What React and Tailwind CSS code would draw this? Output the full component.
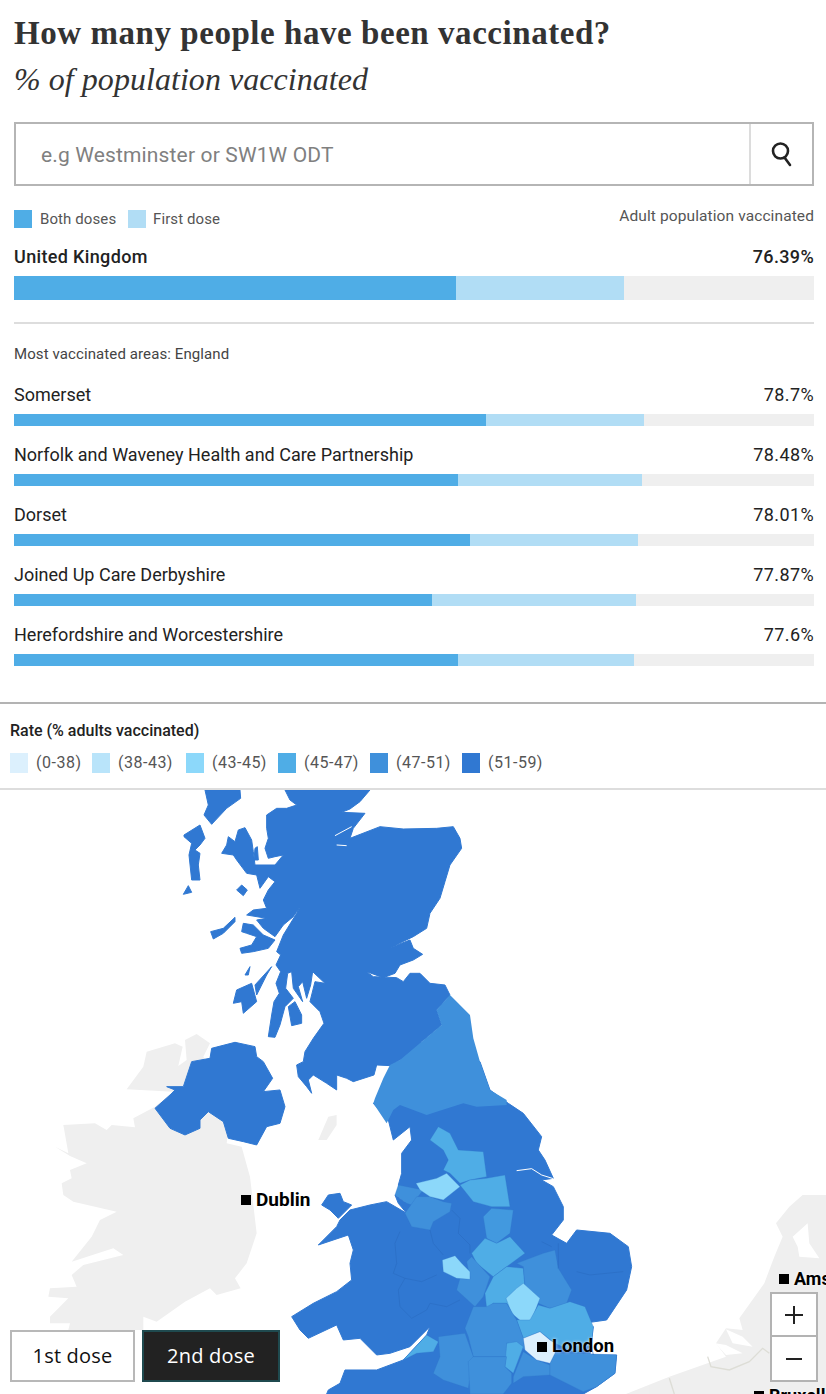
import React from "react";

const sans = "font-['Roboto','Liberation_Sans',sans-serif]";
const D = "#3078d2", M = "#3f90db", L = "#4fade6", P = "#8cd8fa", V = "#dcf0fd", G = "#efefef";

const rows = [
  { name: "Somerset", val: "78.7%", a: 472, b: 158 },
  { name: "Norfolk and Waveney Health and Care Partnership", val: "78.48%", a: 444, b: 184 },
  { name: "Dorset", val: "78.01%", a: 456, b: 168 },
  { name: "Joined Up Care Derbyshire", val: "77.87%", a: 418, b: 204 },
  { name: "Herefordshire and Worcestershire", val: "77.6%", a: 444, b: 176 },
];

const ranges = [
  ["(0-38)", "#dcf0fd", "w-[82px]"],
  ["(38-43)", "#b9e4fa", "w-[94px]"],
  ["(43-45)", "#8cd8fa", "w-[92px]"],
  ["(45-47)", "#4fade6", "w-[92px]"],
  ["(47-51)", "#3f90db", "w-[92px]"],
  ["(51-59)", "#3078d2", "w-[92px]"],
];

const regions = [
  [L, "600,150 625,110 660,130 685,180 760,185 770,260 720,270 690,280 660,250 640,240 655,210 640,180"],
  [M, "505,285 580,300 560,325 545,345 530,340 495,315"],
  [M, "525,370 560,320 600,320 640,335 665,340 660,365 610,395 600,420 545,410"],
  [P, "558,280 620,265 650,250 690,290 640,330 600,320 570,300"],
  [L, "690,285 720,270 770,265 825,255 840,350 785,350 730,335"],
  ["#4299df", "760,380 785,355 850,360 840,430 800,460 770,445"],
  [L, "725,490 765,445 800,460 840,440 885,490 830,530 790,560 740,520"],
  [M, "680,600 690,565 720,565 710,515 725,500 780,560 760,620 735,650"],
  [P, "637,510 675,497 695,520 720,545 720,568 680,565 640,545"],
  [L, "765,610 790,560 830,530 880,535 885,590 830,625 860,680 830,640 790,640 770,655"],
  [M, "860,520 940,490 975,480 985,535 1025,600 1010,640 960,655 925,640 885,590 880,530"],
  [P, "828,625 860,595 880,580 930,625 905,690 875,695 845,670"],
  [L, "860,690 900,690 925,645 960,655 1020,635 1065,650 1090,710 1085,760 1040,790 975,760 930,725 880,745"],
  [M, "705,715 730,650 770,650 790,640 830,640 860,690 880,745 885,780 860,760 830,760 830,800 730,800 715,740"],
  [L, "830,760 860,755 880,770 850,850 825,830"],
  [L, "520,810 590,735 625,755 610,785 560,790"],
  [M, "625,740 705,730 730,800 715,895 640,870 610,850 630,800"],
  [M, "715,815 730,800 830,800 825,830 845,850 845,880 820,912 720,912"],
  [M, "850,860 880,785 920,810 960,825 960,855 880,860 850,880"],
  [M, "960,820 975,790 1040,790 1160,795 1155,850 1100,890 1060,905 960,855"],
  [V, "880,745 930,725 960,750 975,760 975,790 960,820 920,810 885,780"],
];

function MapArt() {
  return (
    <svg className="absolute left-0 top-0" width="826" height="605" viewBox="0 790 826 605">
      {/* Ireland */}
      <g transform="translate(0 1030) scale(0.3333)" fill={G}>
        <path d="M380 178 L430 110 L440 65 L525 40 L548 50 L535 108 L560 90 L555 30 L590 12 L630 40 L610 80 L700 200 L680 340 L725 350 L750 440 L770 610 L740 700 L705 745 L722 775 L650 795 L630 775 L555 815 L470 875 L430 860 L430 900 L205 900 L210 880 L150 880 L150 860 L205 805 L145 800 L150 775 L230 770 L215 735 L250 705 L370 675 L340 655 L215 695 L275 620 L300 570 L350 545 L220 515 L190 495 L185 460 L215 445 L210 420 L260 400 L210 378 L165 350 L205 370 L190 285 L285 280 L320 300 L335 285 L405 292 L400 265 L465 230 L520 185 Z" />
      </g>
      {/* Isle of Man */}
      <g transform="translate(120 785) scale(0.3333)" fill={G}>
        <path d="M595 1065 L625 995 L650 990 L650 1020 L620 1065 Z" />
      </g>
      {/* Netherlands, Belgium */}
      <g transform="translate(626 1180) scale(0.3333)">
        <path fill={G} d="M600 45 L530 45 L490 80 L450 130 L470 170 L445 230 L415 310 L340 415 L350 450 L300 445 L270 490 L300 530 L130 590 L0 642 L600 642 Z" />
        <path fill="#fff" d="M500 170 L545 130 L550 190 L580 235 L520 230 L515 200 Z" />
        <path fill="#fff" d="M300 448 L350 470 L380 500 L320 490 Z" />
        <path fill="#fff" d="M268 490 L300 495 L350 520 L300 525 Z" />
        <path fill="none" stroke="#ddddd6" strokeWidth="4" d="M245 530 L255 560 L310 570 L370 545 L410 505 L430 520" />
        <path fill="none" stroke="#ddddd6" strokeWidth="4" d="M130 595 L145 642" />
      </g>
      <g transform="translate(230 1090) scale(0.3333)" fill={G}>
        <path d="M1195 912 L1260 885 L1260 912 Z" />
      </g>
      {/* Scotland + NI */}
      <g transform="translate(120 785) scale(0.3333)" fill={D} stroke={D} strokeWidth="3" strokeLinejoin="round">
        <path d="M495 15 L750 15 L720 50 L690 72 L665 82 L735 85 L700 130 L690 160 L780 125 L850 132 L950 130 L1000 125 L1020 160 L1025 190 L990 240 L975 290 L960 340 L930 385 L920 430 L880 455 L810 488 L870 465 L880 490 L908 508 L880 525 L840 540 L825 565 L790 578 L740 560 L760 575 L830 578 L850 590 L870 565 L900 565 L930 595 L975 600 L990 630 L950 675 L965 720 L905 770 L880 810 L840 825 L810 842 L770 840 L762 870 L700 890 L680 880 L650 870 L650 915 L620 895 L580 870 L565 885 L575 925 L560 905 L535 875 L530 840 L550 830 L555 800 L580 760 L612 715 L600 680 L570 650 L585 590 L615 595 L578 560 L572 600 L560 640 L548 590 L535 605 L548 650 L520 610 L515 560 L503 565 L497 610 L520 640 L495 665 L480 720 L465 757 L445 755 L455 690 L462 650 L478 625 L468 595 L482 560 L468 540 L482 510 L470 500 L490 450 L530 385 L540 365 L520 395 L490 420 L465 455 L430 430 L410 405 L440 400 L380 390 L400 375 L440 370 L430 345 L445 315 L465 290 L445 275 L420 310 L410 270 L380 265 L350 225 L340 210 L305 205 L320 180 L325 155 L345 170 L355 135 L375 128 L395 165 L400 200 L405 240 L465 240 L490 210 L465 215 L445 220 L435 190 L445 160 L440 130 L440 90 L470 70 L500 70 L530 60 L510 45 Z" />
        <path d="M365 440 L370 415 L400 420 L430 450 L465 465 L445 490 L400 500 L365 505 L360 490 L395 480 L410 455 L380 445 Z" />
        <path d="M255 15 L360 15 L362 40 L320 70 L275 118 L252 90 L265 60 Z" />
        <path d="M192 150 L240 120 L255 160 L240 180 L225 195 L240 205 L235 240 L240 285 L215 285 L207 210 L215 175 L192 155 Z" />
        <path d="M190 328 L205 302 L215 322 Z" />
        <path d="M350 315 L365 300 L382 315 L370 332 Z" />
        <path d="M272 440 L310 430 L345 397 L345 410 L310 445 L280 462 Z" />
        <path d="M375 570 L390 545 L385 570 Z" />
        <path d="M405 600 L455 545 L440 570 L410 630 Z" />
        <path d="M340 655 L350 615 L395 595 L410 650 L370 685 L365 650 Z" />
        <path d="M505 665 L525 650 L545 690 L545 715 L515 722 Z" />
        <path d="M405 190 L412 185 L415 225 L402 225 Z" />
        <path d="M105 970 L150 930 L165 915 L140 905 L190 905 L215 830 L270 820 L275 790 L345 772 L405 785 L410 815 L430 830 L458 880 L430 920 L480 915 L495 965 L480 1015 L440 1025 L410 1080 L370 1070 L325 1060 L310 1010 L265 980 L240 1005 L240 1030 L195 1050 L150 1030 Z" />
        <path fill="none" stroke="#fff" strokeWidth="3" d="M645 152 L695 125 M650 180 L680 182" />
      </g>
      {/* England and Wales */}
      <g transform="translate(230 1090) scale(0.3333)">
        <path fill={D} stroke={D} strokeWidth="3" strokeLinejoin="round" d="M430 40 L475 90 L490 150 L540 110 L545 150 L515 190 L515 250 L505 285 L530 340 L495 315 L505 340 L530 370 L470 335 L420 345 L360 360 L330 390 L320 410 L265 465 L355 435 L370 480 L360 520 L365 570 L320 605 L250 640 L185 680 L210 720 L235 745 L320 705 L340 750 L390 745 L440 795 L480 790 L540 770 L600 710 L590 735 L520 810 L440 840 L345 840 L330 880 L295 900 L290 912 L1060 912 L1100 890 L1155 850 L1160 795 L1080 795 L1090 710 L1060 700 L1130 690 L1190 600 L1205 530 L1195 470 L1140 430 L1040 420 L1010 460 L965 435 L1000 390 L1000 350 L970 290 L935 270 L970 265 L945 210 L925 180 L935 140 L880 70 L835 40 L780 0 L750 -85 L700 -100 Z" />
        <path fill={D} stroke={D} strokeWidth="3" strokeLinejoin="round" d="M275 345 L295 315 L330 310 L340 335 L365 345 L325 385 L300 360 Z" />
        <path fill={M} d="M660 -285 L720 -225 L730 -155 L750 -85 L780 0 L830 30 L830 45 L740 50 L700 40 L620 65 L590 75 L510 45 L490 60 L470 100 L430 40 L435 25 L460 -35 L480 -75 L510 -90 L575 -145 L635 -195 L620 -240 Z" />
        {regions.map(([c, p], i) => (
          <polygon key={i} points={p} fill={c} stroke="#2f74c8" strokeOpacity="0.45" strokeWidth="2" strokeLinejoin="round" />
        ))}
        <path fill="none" stroke="#fff" strokeWidth="3" d="M860 242 L905 236 L935 255 L970 266" />
        <path fill="none" stroke="#2a6cc2" strokeWidth="2" d="M510 425 L495 460 L500 520 L490 550 L525 565 L575 575 L620 555 M525 565 L505 600 L510 650 L545 685 L590 660 L600 640 L650 650 L690 630 M600 420 L610 460 L640 495 M665 360 L690 385 L685 430 L720 465 L720 490 M1040 545 L1080 555 L1180 545 M985 535 L985 460 M935 455 L965 470 M1080 740 L1090 795" />
      </g>
    </svg>
  );
}

function Place({ name, cls, size }) {
  return (
    <div className={`absolute flex items-center gap-[5px] ${cls}`}>
      <span className="block h-[10px] w-[10px] bg-black" />
      <span className={`font-['Roboto','Liberation_Sans',sans-serif] font-bold text-black [text-shadow:0_0_3px_#fff] ${size}`}>{name}</span>
    </div>
  );
}

export default function App() {
  return (
    <div className={`h-[1394px] w-[826px] overflow-hidden bg-white ${sans}`}>
      <div className="pl-[14px] pr-[12px] pt-[14px]">
        <h1 className="font-['Liberation_Serif',serif] text-[33px] font-bold leading-[38px] tracking-[0.55px] text-[#333]">How many people have been vaccinated?</h1>
        <h2 className="mt-[8px] font-['Liberation_Serif',serif] text-[32px] italic leading-[38px] tracking-[0.05px] text-[#333]">% of population vaccinated</h2>
        <div className="mt-[24px] flex h-[64px] w-[800px] border-2 border-[#b5b5b5]">
          <div className="flex flex-1 items-center pl-[25px] pt-[3px] text-[21px] tracking-[0.15px] text-[#808080]">e.g Westminster or SW1W ODT</div>
          <div className="flex w-[63px] items-center justify-center border-l-2 border-[#dcdcdc]">
            <svg width="24" height="26" viewBox="0 0 24 26" fill="none" stroke="#222" strokeWidth="2.6">
              <circle cx="10.5" cy="10" r="7.5" />
              <path d="M14.5 16.5 L20 24" strokeLinecap="round" />
            </svg>
          </div>
        </div>

        <div className="mt-[21px] flex h-[24px] items-start justify-between text-[15px] tracking-[0.1px] text-[#555]">
          <div className="flex items-center pt-[3px]">
            <span className="h-[18px] w-[18px] bg-[#4fade6]" />
            <span className="ml-[8px] w-[88px] leading-[18px]">Both doses</span>
            <span className="h-[18px] w-[18px] bg-[#b1ddf5]" />
            <span className="ml-[7px] leading-[18px]">First dose</span>
          </div>
          <span className="text-[15.5px] leading-[18px]">Adult population vaccinated</span>
        </div>

        <div className="mt-[14px] flex h-[24px] items-center justify-between text-[18px] font-medium leading-[24px] tracking-[0.35px] text-[#222]">
          <span>United Kingdom</span>
          <span>76.39%</span>
        </div>
        <div className="mt-[7px] flex h-[24px] bg-[#efefef]">
          <div className="bg-[#4fade6]" style={{ width: 442 }} />
          <div className="bg-[#b1ddf5]" style={{ width: 168 }} />
        </div>
        <div className="mt-[22px] h-[2px] bg-[#dddddd]" />
        <div className="mt-[20px] text-[15px] leading-[20px] tracking-[0.1px] text-[#444]">Most vaccinated areas: England</div>

        <div className="mt-[19px] flex flex-col gap-[17px]">
          {rows.map((r) => (
            <div key={r.name}>
              <div className="flex h-[24px] items-center justify-between text-[18px] leading-[24px] text-[#222]">
                <span>{r.name}</span>
                <span className="tracking-[0.4px]">{r.val}</span>
              </div>
              <div className="mt-[7px] flex h-[12px] bg-[#efefef]">
                <div className="bg-[#4fade6]" style={{ width: r.a }} />
                <div className="bg-[#b1ddf5]" style={{ width: r.b }} />
              </div>
            </div>
          ))}
        </div>
      </div>

      <div className="mt-[36px] h-[2px] bg-[#b3b3b3]" />
      <div className="h-[84px] pl-[10px] pt-[17px]">
        <div className="text-[16px] font-medium leading-[20px] text-[#222]">Rate (% adults vaccinated)</div>
        <div className="mt-[12px] flex">
          {ranges.map(([t, c, w]) => (
            <div key={t} className={`flex items-center ${w}`}>
              <span className="h-[20px] w-[18px]" style={{ background: c }} />
              <span className="ml-[8px] text-[16px] leading-[20px] tracking-[0.5px] text-[#555]">{t}</span>
            </div>
          ))}
        </div>
      </div>
      <div className="h-[2px] bg-[#dddddd]" />

      <div className="relative h-[604px] overflow-hidden">
        <MapArt />
        <Place name="Dublin" cls="left-[241px] top-[396px]" size="text-[19px]" />
        <Place name="London" cls="left-[537px] top-[543px]" size="text-[18.5px]" />
        <Place name="Amsterdam" cls="left-[779px] top-[475px]" size="text-[18px]" />
        <Place name="Bruxelles" cls="left-[754px] top-[592px]" size="text-[18px]" />

        <div className="absolute left-[10px] top-[540px] flex items-start gap-[7px] font-['Open_Sans',sans-serif] text-[20px] tracking-[0.2px]">
          <div className="flex h-[52px] w-[125px] items-center justify-center border-[2.5px] border-[#b8b8b8] bg-white text-[#111]">1st dose</div>
          <div className="flex h-[52px] w-[138px] items-center justify-center border-[2.5px] border-[#1f4a4f] bg-[#222] text-white">2nd dose</div>
        </div>

        <div className="absolute left-[770px] top-[502px] flex h-[90px] w-[48px] flex-col border-2 border-[#b3b3b3] bg-white">
          <div className="flex h-[43px] items-center justify-center border-b-2 border-[#b3b3b3]">
            <svg width="20" height="20" viewBox="0 0 20 20" stroke="#222" strokeWidth="2"><path d="M1 10 H19 M10 1 V19" /></svg>
          </div>
          <div className="flex flex-1 items-center justify-center">
            <svg width="18" height="4" viewBox="0 0 18 4" stroke="#222" strokeWidth="2"><path d="M1 2 H17" /></svg>
          </div>
        </div>
      </div>
    </div>
  );
}
